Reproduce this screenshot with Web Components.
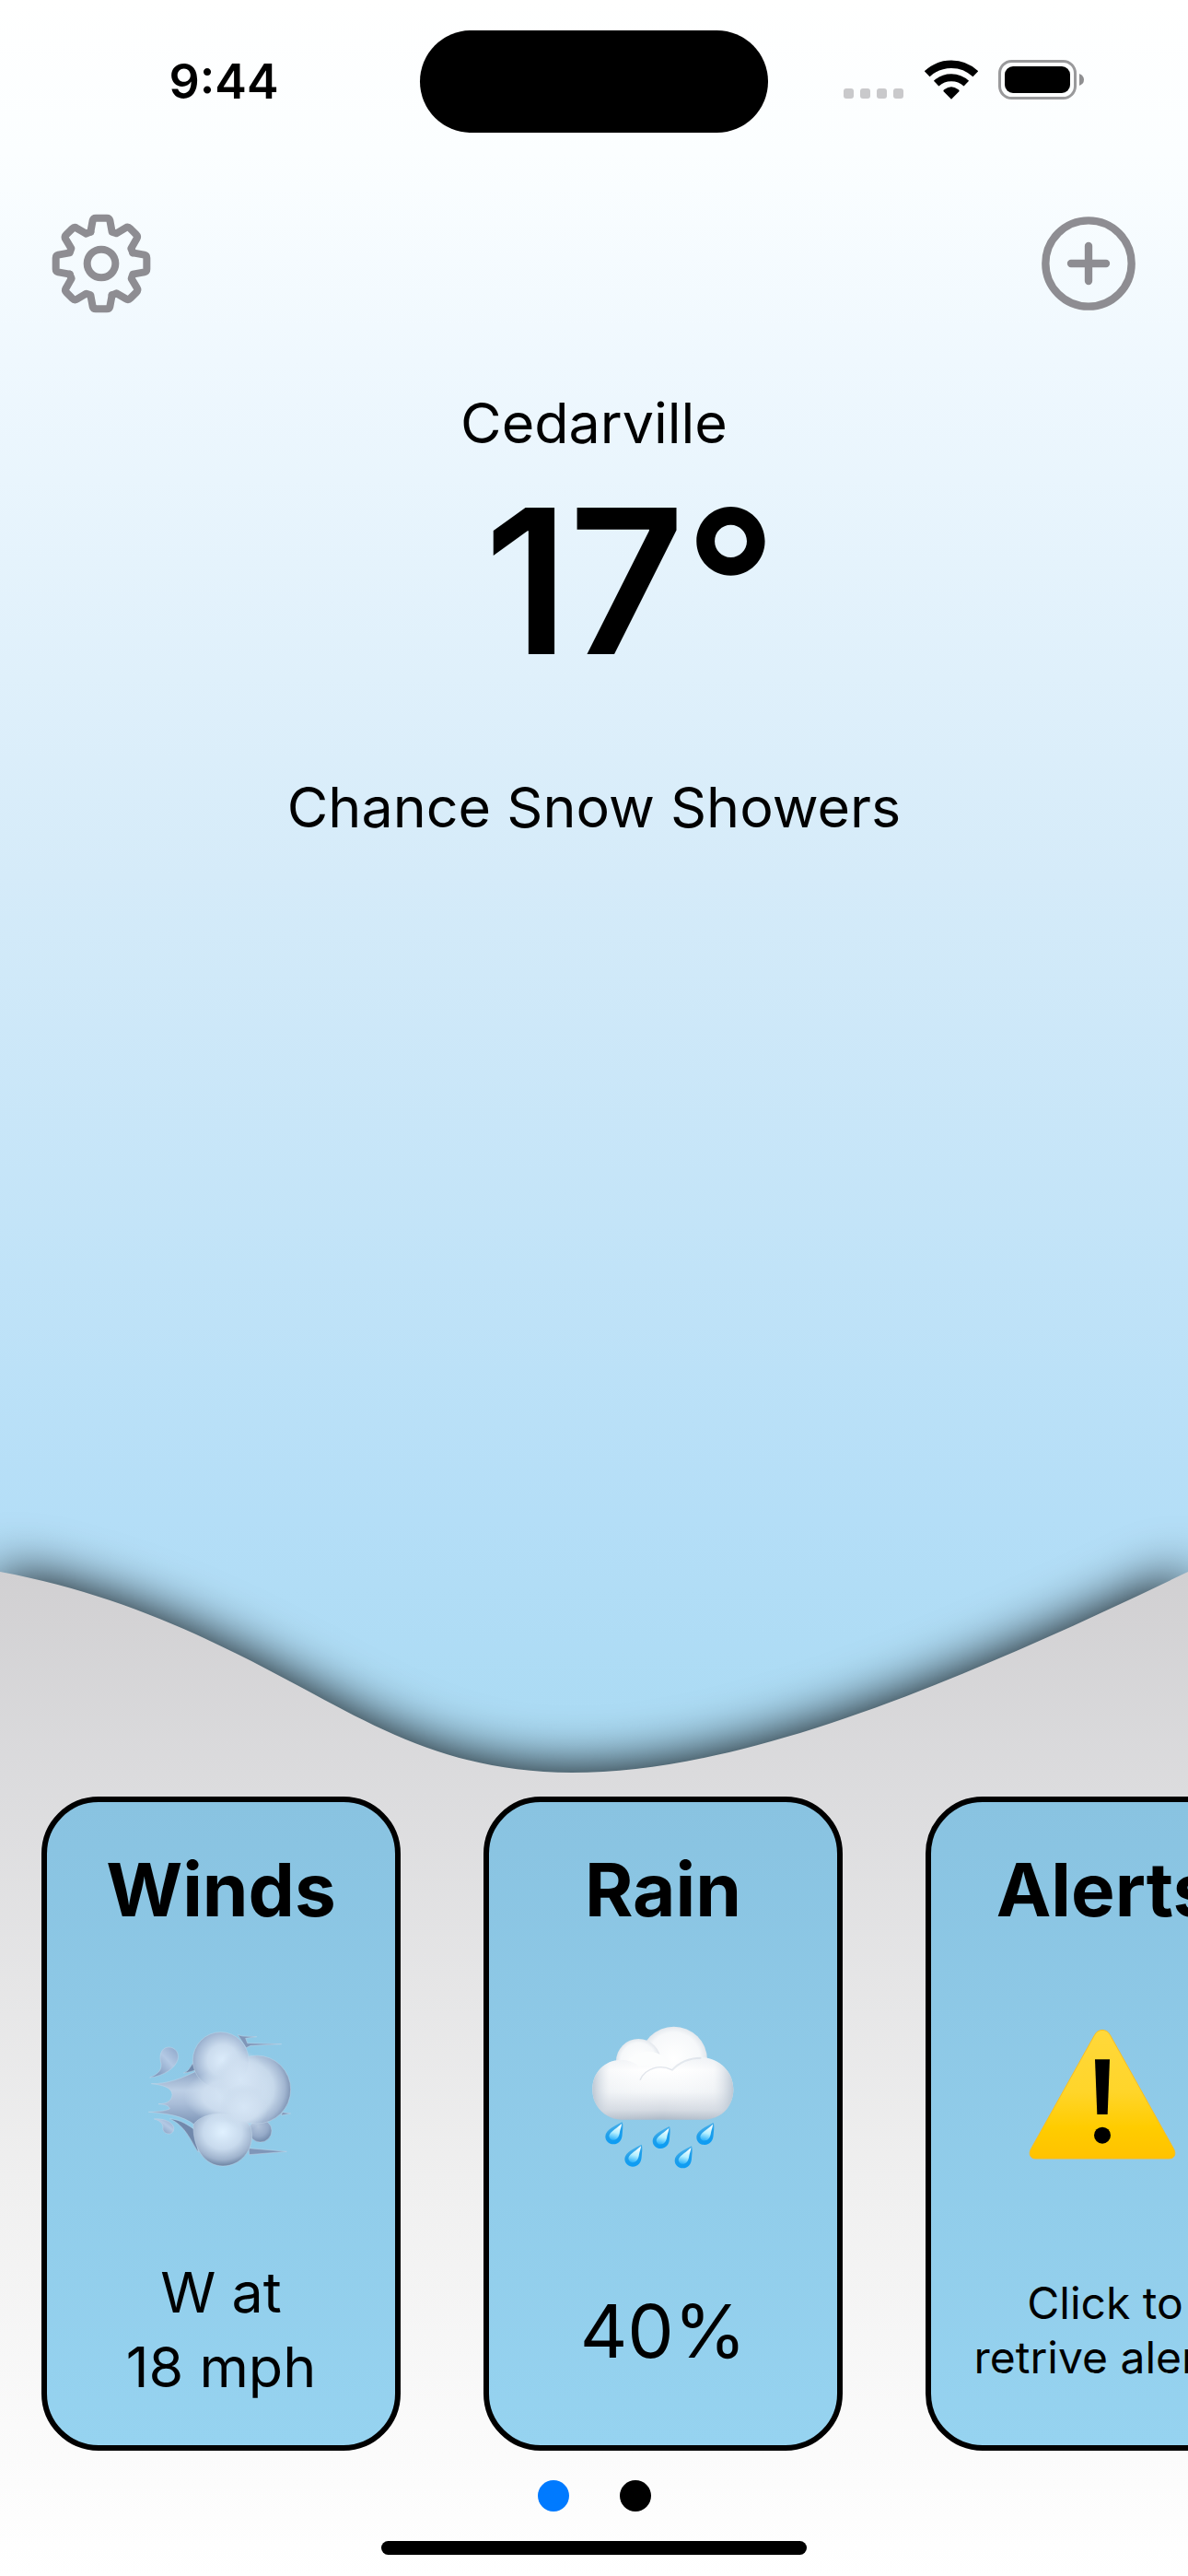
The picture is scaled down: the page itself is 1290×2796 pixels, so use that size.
<!DOCTYPE html>
<html lang="en">
<head>
<meta charset="utf-8">
<meta name="viewport" content="width=device-width, initial-scale=1">
<title>Weather</title>
<style>
  body {
    margin: 0;
    color: #000;
    font-family: Inter, "Liberation Sans", sans-serif;
  }
</style>
</head>
<body>

<weather-screen>
  <status-bar slot="status" time="9:44"></status-bar>
  <tool-bar slot="tools"></tool-bar>
  <current-weather slot="current">
    <span slot="city">Cedarville</span>
    <span slot="temp">&nbsp;17°</span>
    <span slot="summary">Chance Snow Showers</span>
  </current-weather>
  <wave-panel slot="panel">
    <weather-card heading="Winds" icon="wind">W at<br>18 mph</weather-card>
    <weather-card heading="Rain" icon="rain" size="large">40%</weather-card>
    <weather-card heading="Alerts" icon="warning" size="small" action>Click to<br>retrive alerts</weather-card>
  </wave-panel>
</weather-screen>

<script>
// Shared helper: parse the markup once, clone it for each instance.
function makeTemplate(html) {
  const template = document.createElement("template");
  template.innerHTML = html;
  return template;
}

/*
 * Card pictures. All use the same 540 unit box.
 */
const icons = {
  wind: `
    <svg viewBox="0 0 540 540" aria-hidden="true">
      <defs>
        <radialGradient id="puff" cx=".54" cy=".5" r=".62">
          <stop offset="0" stop-color="#dcecfb"/>
          <stop offset=".45" stop-color="#cbdcee"/>
          <stop offset=".78" stop-color="#a3b8d4"/>
          <stop offset="1" stop-color="#8097b8"/>
        </radialGradient>
        <radialGradient id="low" cx=".5" cy=".35" r=".66">
          <stop offset="0" stop-color="#e0f1ff"/>
          <stop offset=".5" stop-color="#c8daed"/>
          <stop offset=".8" stop-color="#9fb3cd"/>
          <stop offset="1" stop-color="#677f9f"/>
        </radialGradient>
        <radialGradient id="right" cx=".38" cy=".48" r=".62">
          <stop offset="0" stop-color="#d9e9f8"/>
          <stop offset=".6" stop-color="#c6d8ea"/>
          <stop offset=".86" stop-color="#a2b6d1"/>
          <stop offset="1" stop-color="#7f95b5"/>
        </radialGradient>
        <linearGradient id="tail" x1="0" y1="0" x2="0" y2="1">
          <stop offset="0" stop-color="#8ea5c5"/>
          <stop offset=".35" stop-color="#bdcfe5"/>
          <stop offset=".6" stop-color="#a9bdd8"/>
          <stop offset="1" stop-color="#7b93b5"/>
        </linearGradient>
        <linearGradient id="bead" x1="1" y1="0" x2="0" y2="1">
          <stop offset="0" stop-color="#8ca5c9"/>
          <stop offset=".4" stop-color="#b3c9e4"/>
          <stop offset="1" stop-color="#6d88b0"/>
        </linearGradient>
        <radialGradient id="knob" cx=".4" cy=".3" r=".75">
          <stop offset="0" stop-color="#b3c5dc"/>
          <stop offset=".6" stop-color="#95aac8"/>
          <stop offset="1" stop-color="#6c84a6"/>
        </radialGradient>
        <radialGradient id="core">
          <stop offset="0" stop-color="#d6e6f6"/>
          <stop offset=".6" stop-color="#cfdff0" stop-opacity=".9"/>
          <stop offset="1" stop-color="#c8daec" stop-opacity="0"/>
        </radialGradient>
      </defs>
      <g stroke="#c3d6e8" stroke-width="1.5">
        <path fill="url(#bead)" d="M38 195C64 184 77 172 75 150C68 128 72 97 99 96C122 96 135 116 129 137C121 164 85 189 38 195Z"/>
        <path fill="url(#bead)" d="M52 330C78 327 108 337 116 356C118 370 110 379 99 378C86 377 79 368 81 356C79 343 69 334 52 330Z"/>
        <path fill="#7189ac" d="M148 180C164 174 167 165 178 148L190 170C176 174 165 178 148 180Z"/>
        <path fill="#7f96b8" d="M325 56L340 60L386 62L350 67L356 83L467 86L366 91L352 98Z"/>
        <path fill="#7f96b8" d="M360 425L484 436L362 446ZM470 308L497 312L466 318Z"/>
        <path fill="#7189ac" d="M103 329C140 332 166 352 186 366L196 438C170 400 155 352 103 329Z"/>
        <circle cx="398" cy="368" r="37" fill="url(#knob)"/>
        <path fill="url(#tail)" d="M43 215C95 216 140 198 186 176L300 190L310 350L186 350C145 318 92 312 34 307C63 306 83 305 103 297C101 286 88 282 66 281C98 280 109 270 111 250C109 227 80 219 43 215Z"/>
        <circle cx="386" cy="234" r="111" fill="url(#right)"/>
        <ellipse cx="269" cy="139" rx="91" ry="92" fill="url(#puff)"/>
        <path fill="url(#low)" d="M180 348C216 298 332 300 366 355C386 418 340 483 276 483C215 482 178 424 180 348Z"/>
      </g>
      <ellipse cx="300" cy="255" rx="150" ry="90" fill="url(#core)"/>
      <ellipse cx="335" cy="200" rx="85" ry="95" fill="url(#core)"/>
      <ellipse cx="345" cy="290" rx="80" ry="75" fill="url(#core)"/>
    </svg>`,

  rain: `
    <svg viewBox="0 0 540 540" aria-hidden="true">
      <defs>
        <radialGradient id="lobe" cx=".5" cy=".48" r=".56">
          <stop offset="0" stop-color="#ffffff"/>
          <stop offset=".7" stop-color="#f6f8fa"/>
          <stop offset=".9" stop-color="#dfe4ea"/>
          <stop offset="1" stop-color="#bcc8d4"/>
        </radialGradient>
        <linearGradient id="base" x1="0" y1="0" x2="0" y2="1">
          <stop offset="0" stop-color="#f2f4f7"/>
          <stop offset=".2" stop-color="#ffffff"/>
          <stop offset=".55" stop-color="#f5f7f9"/>
          <stop offset=".85" stop-color="#d3d9e1"/>
          <stop offset="1" stop-color="#adb9c7"/>
        </linearGradient>
        <linearGradient id="side" x1="0" y1="0" x2="1" y2="0">
          <stop offset="0" stop-color="#aebccb" stop-opacity=".8"/>
          <stop offset=".12" stop-color="#dde3ea" stop-opacity=".2"/>
          <stop offset=".5" stop-color="#ffffff" stop-opacity="0"/>
          <stop offset=".86" stop-color="#dde3ea" stop-opacity=".2"/>
          <stop offset="1" stop-color="#aebccb" stop-opacity=".8"/>
        </linearGradient>
        <linearGradient id="rim" x1=".3" y1="0" x2=".6" y2="1">
          <stop offset="0" stop-color="#5db9ea"/>
          <stop offset=".5" stop-color="#1e9eea"/>
          <stop offset="1" stop-color="#0a9cf5"/>
        </linearGradient>
        <linearGradient id="shine" x1=".6" y1="0" x2=".4" y2="1">
          <stop offset="0" stop-color="#ffffff"/>
          <stop offset=".55" stop-color="#b5f0ff"/>
          <stop offset="1" stop-color="#2fb4fb"/>
        </linearGradient>
        <g id="drop">
          <path fill="url(#rim)" d="M55 0C36 10 0 25 0 47C0 62 12 72 26 72C45 72 54 58 55 40C56 25 59 10 55 0Z"/>
          <path fill="url(#shine)" d="M53 5C42 17 16 30 12 44C12 55 20 60 29 58C42 55 45 44 47 32C49 22 53 13 53 5Z"/>
        </g>
      </defs>
      <circle cx="305" cy="138" r="109" fill="url(#lobe)"/>
      <circle cx="190" cy="142" r="73" fill="url(#lobe)"/>
      <ellipse cx="220" cy="180" rx="80" ry="70" fill="#fcfdfd"/>
      <path fill="url(#base)" d="M40 234C40 178 80 138 132 138C158 138 177 145 190 158C222 154 262 155 300 169C322 144 352 129 390 129C452 129 499 175 499 234C499 286 462 332 402 332H134C78 330 40 286 40 234Z"/>
      <path fill="url(#side)" d="M40 234C40 178 80 138 132 138C158 138 177 145 190 158C222 154 262 155 300 169C322 144 352 129 390 129C452 129 499 175 499 234C499 286 462 332 402 332H134C78 330 40 286 40 234Z"/>
      <path fill="none" stroke="#c5ced9" stroke-opacity=".5" stroke-width="4" d="M195 203C212 164 262 151 298 170"/>
      <path fill="none" stroke="#d0d8e1" stroke-opacity=".5" stroke-width="6" d="M298 172C325 142 358 131 394 131"/>
      <use href="#drop" x="82" y="340"/>
      <use href="#drop" x="145" y="413"/>
      <use href="#drop" x="236" y="354"/>
      <use href="#drop" x="308" y="418"/>
      <use href="#drop" x="379" y="342"/>
    </svg>`,

  warning: `
    <svg viewBox="0 0 540 540" aria-hidden="true">
      <defs>
        <linearGradient id="yellow" x1="0" y1="0" x2="0" y2="1">
          <stop offset="0" stop-color="#ffd83a"/>
          <stop offset=".48" stop-color="#ffd52a"/>
          <stop offset=".76" stop-color="#ffcc00"/>
          <stop offset="1" stop-color="#ffc200"/>
        </linearGradient>
      </defs>
      <path fill="url(#yellow)" stroke="#f9bd22" stroke-width="3" d="M236 56C246 35 276 35 286 56L494 428C502 444 496 459 478 459H44C26 459 20 444 28 428Z"/>
      <path d="M237 136H285L278 315H244Z"/>
      <circle cx="261" cy="383" r="27"/>
    </svg>`
};

/*
 * Screen: sky gradient behind a column of slots.
 */
const screenTemplate = makeTemplate(`
  <style>
    :host {
      display: flex;
      flex-direction: column;
      min-height: 100vh;
      overflow: hidden;
      background: linear-gradient(#fff 0%, #fbfeff 6%, #eff8fe 14%, #d5ebf9 34%, #b4def7 59%, #a9daf3 69%);
    }
    .space {
      flex: 1;
    }
  </style>
  <slot name="status"></slot>
  <slot name="tools"></slot>
  <slot name="current"></slot>
  <div class="space"></div>
  <slot name="panel"></slot>
`);

class WeatherScreen extends HTMLElement {
  connectedCallback() {
    this.attachShadow({ mode: "open" });
    this.shadowRoot.appendChild(screenTemplate.content.cloneNode(true));
  }
}

/*
 * Status bar: time, island, signal icons.
 */
const statusTemplate = makeTemplate(`
  <style>
    :host {
      display: grid;
      grid-template-columns: 1fr 378px 1fr;
      align-items: center;
      padding: 33px 0 34px;
    }
    .time {
      padding-left: 30px;
      text-align: center;
      font-size: 52px;
      font-weight: 600;
      line-height: 64px;
    }
    .island {
      height: 111px;
      border-radius: 56px;
      background: #000;
    }
    .signals {
      display: flex;
      justify-content: center;
      align-items: flex-end;
      gap: 22px;
      padding: 0 30px 4px 0;
    }
    svg {
      display: block;
    }
  </style>
  <div class="time"></div>
  <div class="island"></div>
  <div class="signals">
    <svg width="66" height="12" viewBox="0 0 66 12" fill="#c9c9cb" aria-label="No signal">
      <rect width="11" height="11" rx="3"/>
      <rect x="18" width="11" height="11" rx="3"/>
      <rect x="36" width="11" height="11" rx="3"/>
      <rect x="54" width="11" height="11" rx="3"/>
    </svg>
    <svg width="58" height="43" viewBox="-87 -128 174 129" aria-label="Wi-Fi">
      <path d="M-79 -82A114 114 0 0 1 79 -82" fill="none" stroke="#000" stroke-width="25"/>
      <path d="M-49 -51A71 71 0 0 1 49 -51" fill="none" stroke="#000" stroke-width="24"/>
      <path d="M0 0L-26 -26Q-26 -30 -22 -32Q0 -48 22 -32Q26 -30 26 -26Z"/>
    </svg>
    <svg width="94" height="43" viewBox="0 0 94 43" aria-label="Battery">
      <rect x="1.5" y="1.5" width="82" height="40" rx="13" fill="none" stroke="#99999b" stroke-width="3"/>
      <rect x="7" y="7" width="71" height="29" rx="9"/>
      <path d="M88 15Q93 17 93 21.500Q93 26 88 28Z" fill="#8f8f91"/>
    </svg>
  </div>
`);

class StatusBar extends HTMLElement {
  connectedCallback() {
    this.attachShadow({ mode: "open" });
    this.shadowRoot.appendChild(statusTemplate.content.cloneNode(true));
    this.shadowRoot.querySelector(".time").textContent = this.getAttribute("time");
  }
}

/*
 * Toolbar: settings and add buttons.
 */
const toolsTemplate = makeTemplate(`
  <style>
    :host {
      display: flex;
      justify-content: space-between;
      margin-top: 52px;
      padding: 0 52px 0 54px;
    }
    button {
      width: 112px;
      height: 112px;
      padding: 0;
      border: 0;
      background: none;
      color: #8e8d92;
      cursor: pointer;
    }
    svg {
      display: block;
      width: 100%;
      height: 100%;
      fill: none;
      stroke: currentColor;
      stroke-linecap: round;
      stroke-linejoin: round;
    }
  </style>
  <button type="button" aria-label="Settings">
    <svg viewBox="-168 -168 336 336" stroke-width="24">
      <defs>
        <!-- a quarter of the gear: one straight tooth and one diagonal -->
        <path id="quarter" d="M-35 -103L-28 -140Q-26 -148 -18 -148H18Q26 -148 28 -140L35 -103L49 -98L79 -116Q87 -121 94 -114L113 -95Q120 -88 115 -80L97 -49L103 -35"/>
      </defs>
      <use href="#quarter"/>
      <use href="#quarter" transform="rotate(90)"/>
      <use href="#quarter" transform="rotate(180)"/>
      <use href="#quarter" transform="rotate(270)"/>
      <circle r="46"/>
    </svg>
  </button>
  <button type="button" aria-label="Add location">
    <svg viewBox="-168 -168 336 336" stroke-width="25">
      <circle r="140"/>
      <path d="M-57 0H57M0 -57V57"/>
    </svg>
  </button>
`);

class ToolBar extends HTMLElement {
  connectedCallback() {
    this.attachShadow({ mode: "open" });
    this.shadowRoot.appendChild(toolsTemplate.content.cloneNode(true));
  }
}

/*
 * Current conditions.
 */
const currentTemplate = makeTemplate(`
  <style>
    :host {
      display: block;
      margin-top: 77px;
      text-align: center;
    }
    .line {
      font-size: 61px;
      line-height: 80px;
    }
    h1, p {
      margin: 0;
      font-weight: 400;
    }
    .temp {
      margin-bottom: 73px;
      padding-left: 24px;
      font-size: 218px;
      font-weight: 600;
      line-height: 264px;
    }
  </style>
  <h1 class="line"><slot name="city"></slot></h1>
  <p class="temp"><slot name="temp"></slot></p>
  <p class="line"><slot name="summary"></slot></p>
`);

class CurrentWeather extends HTMLElement {
  connectedCallback() {
    this.attachShadow({ mode: "open" });
    this.shadowRoot.appendChild(currentTemplate.content.cloneNode(true));
  }
}

/*
 * Bottom panel: wave backdrop, row of cards, page dots.
 */
const panelTemplate = makeTemplate(`
  <style>
    :host {
      display: block;
      position: relative;
      padding: 244px 0 23px;
    }
    /* The backdrop lies under the cards. */
    .wave {
      position: absolute;
      inset: 0;
      width: 100%;
      height: 100%;
      overflow: visible;
    }
    .cards {
      position: relative;
      display: flex;
      gap: 90px;
      padding-left: 45px;
      overflow: hidden;
    }
    .dots {
      position: relative;
      display: flex;
      justify-content: center;
      gap: 55px;
      margin: 32px 0;
    }
    .dots button {
      width: 34px;
      height: 34px;
      padding: 0;
      border: 0;
      border-radius: 50%;
      background: #000;
    }
    .dots button[aria-current] {
      background: #007aff;
    }
    .home {
      position: relative;
      width: 462px;
      height: 15px;
      margin: 0 auto;
      border-radius: 8px;
      background: #000;
    }
  </style>
  <svg class="wave" viewBox="0 0 1290 1090" preserveAspectRatio="none" aria-hidden="true">
    <defs>
      <linearGradient id="grey" x1="0" y1="0" x2="0" y2="1">
        <stop offset="0" stop-color="#d1d0d2"/>
        <stop offset=".22" stop-color="#dcdcde"/>
        <stop offset=".6" stop-color="#efefef"/>
        <stop offset=".85" stop-color="#fafafa"/>
        <stop offset="1" stop-color="#ffffff"/>
      </linearGradient>
      <filter id="soft" x="-10%" y="-15%" width="120%" height="130%">
        <feGaussianBlur stdDeviation="30"/>
      </filter>
    </defs>
    <path filter="url(#soft)" d="M0 0C130 24 230 73 330 127C420 176 500 218 621 218C800 218 1020 130 1290 0V1090H0Z"/>
    <path fill="url(#grey)" d="M0 0C130 24 230 73 330 127C420 176 500 218 621 218C800 218 1020 130 1290 0V1090H0Z"/>
  </svg>
  <div class="cards"><slot></slot></div>
  <div class="dots">
    <button type="button" aria-label="Page 1" aria-current="page"></button>
    <button type="button" aria-label="Page 2"></button>
  </div>
  <div class="home"></div>
`);

class WavePanel extends HTMLElement {
  connectedCallback() {
    this.attachShadow({ mode: "open" });
    this.shadowRoot.appendChild(panelTemplate.content.cloneNode(true));
  }
}

/*
 * Card. With the "action" attribute its text is a button.
 */
const cardTemplate = makeTemplate(`
  <style>
    :host {
      display: flex;
      flex: none;
      flex-direction: column;
      align-items: center;
      box-sizing: border-box;
      width: 390px;
      min-height: 710px;
      padding-top: 45px;
      border: 6px solid #000;
      border-radius: 62px;
      background: linear-gradient(#89c3e1, #96d3f0);
      text-align: center;
      white-space: nowrap;
      font-size: 61px;
      line-height: 81px;
    }
    :host([size="large"]) {
      font-size: 80px;
    }
    :host([size="small"]) {
      font-size: 48px;
      line-height: 59px;
    }
    h2 {
      margin: 0 0 89px;
      font-size: 80px;
      font-weight: 700;
      line-height: 100px;
    }
    svg {
      display: block;
      width: 180px;
      height: 180px;
    }
    .text {
      display: flex;
      flex: 1;
      align-items: center;
      padding-top: 34px;
    }
    button {
      padding: 0;
      border: 0;
      background: none;
      color: inherit;
      font: inherit;
      cursor: pointer;
    }
  </style>
  <h2></h2>
  <div class="icon"></div>
  <div class="text"></div>
`);

class WeatherCard extends HTMLElement {
  connectedCallback() {
    this.attachShadow({ mode: "open" });
    const root = this.shadowRoot;
    root.appendChild(cardTemplate.content.cloneNode(true));

    root.querySelector("h2").textContent = this.getAttribute("heading");
    root.querySelector(".icon").innerHTML = icons[this.getAttribute("icon")];

    const body = document.createElement(this.hasAttribute("action") ? "button" : "div");
    body.appendChild(document.createElement("slot"));
    root.querySelector(".text").appendChild(body);
  }
}

window.customElements.define("weather-screen", WeatherScreen);
window.customElements.define("status-bar", StatusBar);
window.customElements.define("tool-bar", ToolBar);
window.customElements.define("current-weather", CurrentWeather);
window.customElements.define("wave-panel", WavePanel);
window.customElements.define("weather-card", WeatherCard);
</script>
</body>
</html>
